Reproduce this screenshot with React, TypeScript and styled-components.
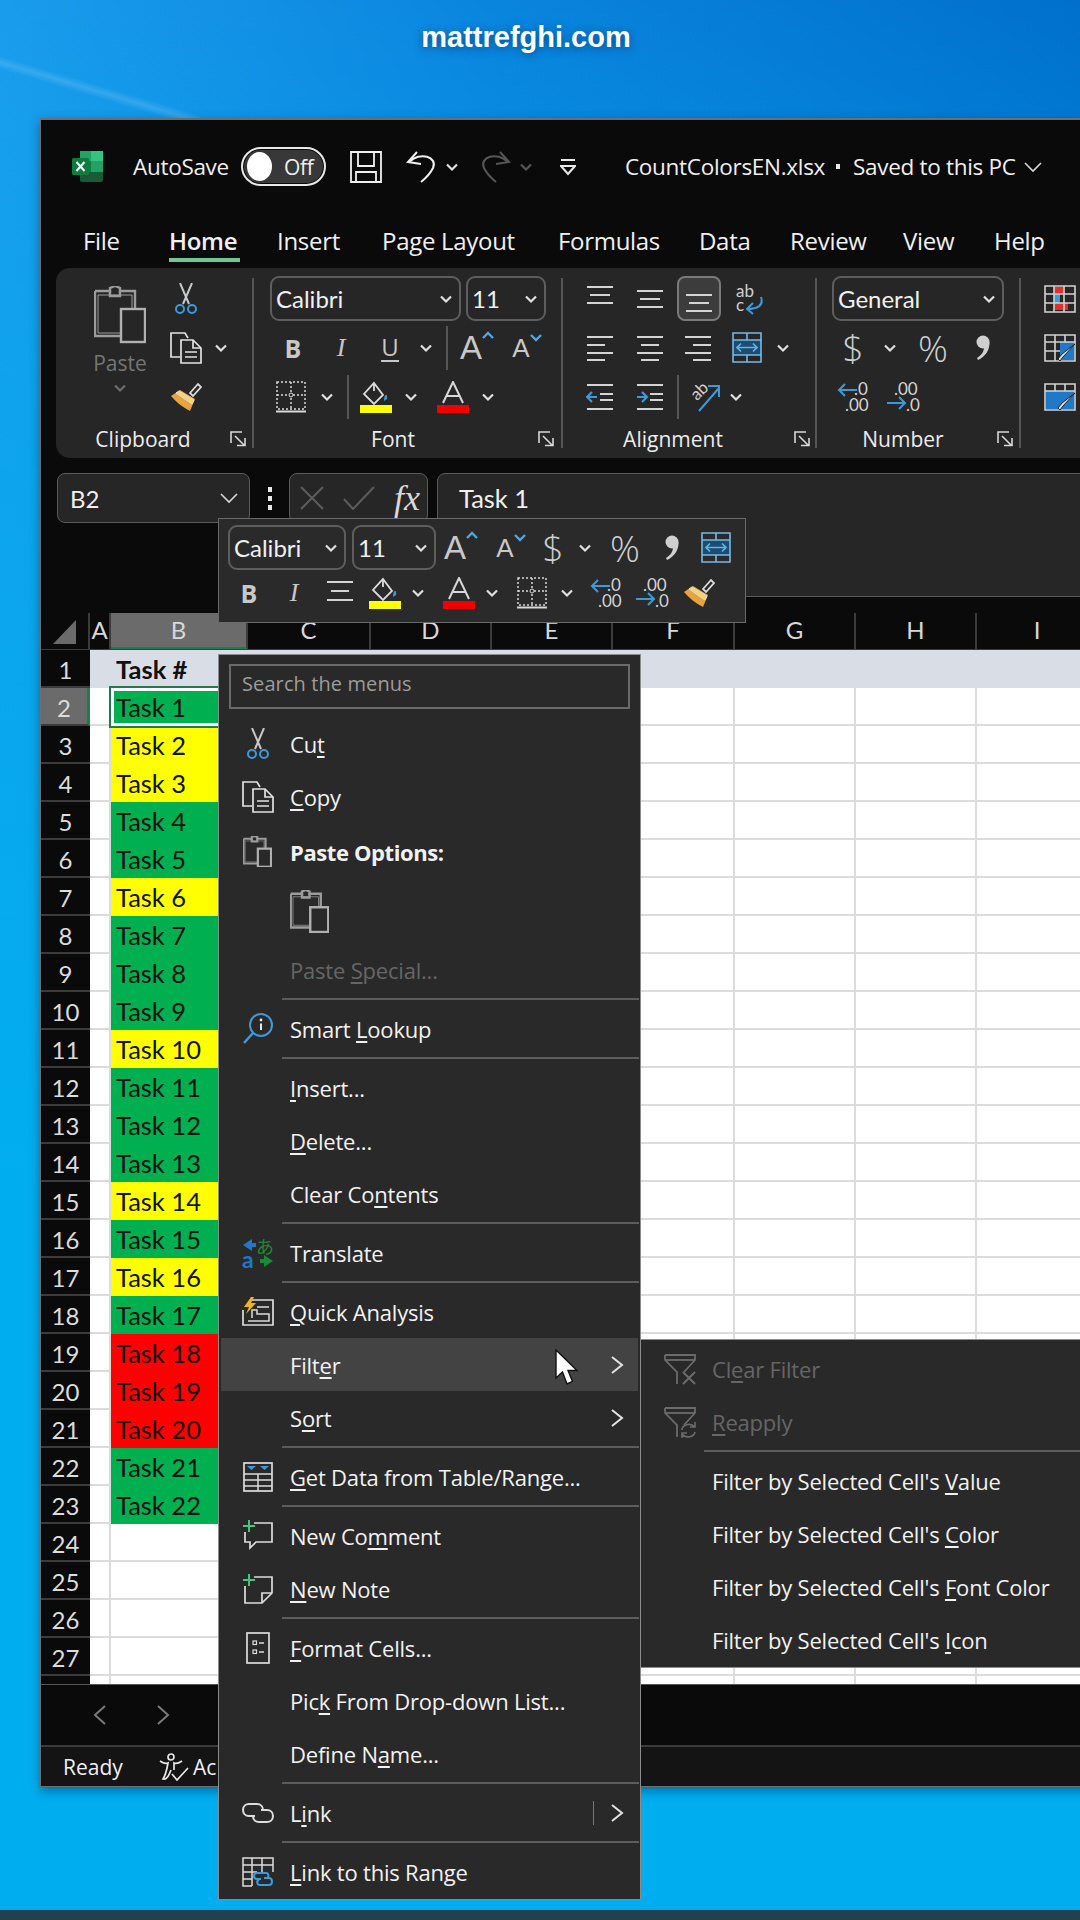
import React from 'react'
import styled, { createGlobalStyle } from 'styled-components'

const UI_FONT = `'Open Sans', 'Noto Sans', sans-serif`
const CELL_FONT = `Lato, 'Liberation Sans', sans-serif`

const GlobalStyle = createGlobalStyle`
  html, body {
    margin: 0;
    padding: 0;
    background: #00aeef;
  }
  #root {
    width: 1080px;
    height: 1920px;
    overflow: hidden;
  }
  svg {
    flex-shrink: 0;
  }
`

const Desktop = styled.div`
  position: relative;
  display: flex;
  flex-direction: column;
  width: 1080px;
  height: 1920px;
  overflow: hidden;
  background:
    linear-gradient(16.5deg, transparent 46%, rgba(255, 255, 255, 0.14) 50%, transparent 54%) 0 37px / 200px 110px no-repeat,
    linear-gradient(180deg, rgba(0, 174, 239, 0) 0%, rgba(0, 174, 239, 0.35) 18%, #00aeef 62%),
    linear-gradient(90deg, #1a9cec 0%, #0a85de 45%, #0070cc 100%);
  background-color: #00aeef;
`

const Watermark = styled.div`
  height: 118px;
  flex: none;
  padding: 20px 28px 0 0;
  box-sizing: border-box;
  text-align: center;
  font: bold 29px 'Liberation Sans', sans-serif;
  line-height: 34px;
  color: #fff;
  text-shadow: 0 2px 8px rgba(0, 40, 90, 0.6);
`

const Taskbar = styled.div`
  height: 10px;
  flex: none;
  background: #23404f;
`

const Window = styled.div`
  flex: none;
  width: 1060px;
  height: 1669px;
  margin: 0 0 123px 40px;
  box-sizing: border-box;
  display: flex;
  flex-direction: column;
  background: #0a0a0a;
  border: 1px solid #6e6e6e;
  border-top-width: 2px;
  box-shadow: 0 4px 10px rgba(0, 30, 70, 0.45);
  font-family: ${UI_FONT};
  color: #f0f0f0;
`

const TitleBar = styled.div`
  height: 93px;
  flex: none;
  display: flex;
  align-items: center;
  font-size: 22.5px;
`

const TitleSlot = styled.div<{ $w: number }>`
  width: ${(p) => p.$w}px;
  flex: none;
  display: flex;
  align-items: center;
  justify-content: center;
`

const TitleText = styled.span<{ $w: number }>`
  width: ${(p) => p.$w}px;
  flex: none;
  white-space: nowrap;
  letter-spacing: -0.3px;
`

const Toggle = styled.div`
  width: 85px;
  height: 39px;
  flex: none;
  box-sizing: border-box;
  border: 2px solid #e8e8e8;
  border-radius: 20px;
  background: #383838;
  box-shadow: inset 0 0 0 1px #0a0a0a;
  display: flex;
  align-items: center;
  padding-left: 4px;
  font-size: 21px;
  gap: 12px;
  letter-spacing: -0.3px;
`

const ToggleKnob = styled.span`
  width: 25px;
  height: 29px;
  border-radius: 50%;
  background: #fff;
  flex: none;
`

const Tabs = styled.div`
  height: 55px;
  flex: none;
  display: flex;
  align-items: center;
  padding-left: 42px;
`

const Tab = styled.div<{ $w: number; $active?: boolean }>`
  position: relative;
  width: ${(p) => p.$w}px;
  flex: none;
  height: 55px;
  line-height: 55px;
  font-size: 24px;
  letter-spacing: -0.3px;
  font-weight: ${(p) => (p.$active ? 600 : 400)};
  white-space: nowrap;
  &::after {
    content: '';
    display: ${(p) => (p.$active ? 'block' : 'none')};
    position: absolute;
    left: 0;
    bottom: 6px;
    width: 71px;
    height: 4px;
    background: #6fc892;
  }
`

const Ribbon = styled.div`
  height: 190px;
  flex: none;
  margin-left: 15px;
  display: flex;
  background: #262626;
  border-radius: 14px 0 0 14px;
  overflow: hidden;
`

const Group = styled.div<{ $w: number }>`
  width: ${(p) => p.$w}px;
  flex: none;
  display: flex;
  flex-direction: column;
  padding-top: 8px;
  box-sizing: border-box;
`

const GroupBody = styled.div`
  display: flex;
  flex-direction: column;
  gap: 4px;
  height: 143px;
`

const GroupDivider = styled.div`
  width: 2px;
  flex: none;
  margin: 10px 0;
  background: #565656;
`

const ToolRow = styled.div<{ $pad?: number }>`
  display: flex;
  align-items: center;
  height: 45px;
  padding-left: ${(p) => p.$pad ?? 0}px;
  gap: 0;
`

const Slot = styled.div<{ $w: number }>`
  width: ${(p) => p.$w}px;
  height: 45px;
  flex: none;
  display: flex;
  align-items: center;
  justify-content: center;
  color: #cfcfcf;
`

const SelectedSlot = styled(Slot)`
  box-sizing: border-box;
  border: 2px solid #7a7a7a;
  border-radius: 8px;
  background: #3c3c3c;
`

const RowDivider = styled.span`
  width: 2px;
  height: 44px;
  background: #565656;
  flex: none;
`

const LabelRow = styled.div`
  display: flex;
  align-items: center;
  height: 32px;
  margin-top: 4px;
`

const GroupLabel = styled.div<{ $w: number }>`
  width: ${(p) => p.$w}px;
  flex: none;
  text-align: center;
  font-size: 21px;
  letter-spacing: 0;
  color: #ececec;
`

const LauncherBox = styled.div<{ $mr: number }>`
  margin-left: auto;
  margin-right: ${(p) => p.$mr}px;
  display: flex;
`

const Combo = styled.div<{ $w: number }>`
  width: ${(p) => p.$w}px;
  height: 45px;
  flex: none;
  box-sizing: border-box;
  display: flex;
  align-items: center;
  justify-content: space-between;
  padding: 0 6px 0 4px;
  border: 2px solid #5e5e5e;
  border-radius: 9px;
  font-family: ${CELL_FONT};
  font-size: 24px;
  color: #f0f0f0;
`

const PasteColumn = styled.div`
  width: 68px;
  margin: 0 0 0 30px;
  flex: none;
  display: flex;
  flex-direction: column;
  align-items: center;
  padding-top: 10px;
  font-size: 21px;
  color: #757575;
`

const PasteLabel = styled.div`
  margin-top: 6px;
  line-height: 26px;
`

const PasteChevron = styled.div`
  margin-top: 7px;
  display: flex;
`

const ClipboardTools = styled.div`
  margin-left: 8px;
  display: flex;
  flex-direction: column;
  gap: 4px;
`

const ClipboardBody = styled.div`
  display: flex;
  height: 143px;
`

const BoldGlyph = styled.span`
  font: bold 25px 'Open Sans', sans-serif;
  color: #c8c8c8;
`

const ItalicGlyph = styled.span`
  font: italic 26px 'Liberation Serif', serif;
  color: #c8c8c8;
`

const UnderGlyph = styled.span`
  font: 24px 'Open Sans', sans-serif;
  line-height: 26px;
  color: #c8c8c8;
  border-bottom: 2px solid #c8c8c8;
`

const ThinGlyph = styled.span<{ $size: number }>`
  font-family: ${UI_FONT};
  font-size: ${(p) => p.$size}px;
  font-weight: 300;
  color: #cfcfcf;
`

const SizeGlyph = styled.span<{ $size: number }>`
  display: flex;
  align-items: flex-start;
  font: ${(p) => p.$size}px/${(p) => p.$size + 2}px 'Liberation Sans', sans-serif;
  color: #c8c8c8;
`

const FormulaRow = styled.div`
  height: 124px;
  flex: none;
  margin-top: 15px;
  padding-left: 16px;
  display: flex;
  align-items: flex-start;
`

const NameBox = styled.div`
  width: 193px;
  height: 50px;
  flex: none;
  box-sizing: border-box;
  padding: 0 10px 0 12px;
  display: flex;
  align-items: center;
  justify-content: space-between;
  background: #262626;
  border: 1px solid #5a5a5a;
  border-radius: 8px;
  font-family: ${CELL_FONT};
  font-size: 24px;
`

const Dots = styled.div`
  width: 39px;
  height: 50px;
  flex: none;
  display: flex;
  flex-direction: column;
  align-items: center;
  justify-content: center;
  gap: 4px;
`

const Dot = styled.span`
  width: 4px;
  height: 5px;
  background: #e8e8e8;
`

const FxBox = styled.div`
  width: 139px;
  height: 50px;
  flex: none;
  box-sizing: border-box;
  display: flex;
  align-items: center;
  justify-content: space-between;
  padding: 0 7px 0 10px;
  background: #262626;
  border: 1px solid #5a5a5a;
  border-radius: 8px;
`

const FxGlyph = styled.span`
  font: italic 36px 'Liberation Serif', serif;
  color: #d8d8d8;
`

const FormulaInput = styled.div`
  flex: 1;
  height: 124px;
  margin-left: 9px;
  box-sizing: border-box;
  padding: 9px 0 0 21px;
  background: #262626;
  border: 1px solid #5a5a5a;
  border-radius: 8px 0 0 8px;
  font-family: ${CELL_FONT};
  font-size: 25.5px;
`

const ColumnHeaders = styled.div`
  height: 37px;
  flex: none;
  margin-top: 16px;
  display: flex;
`

const Corner = styled.div`
  width: 49px;
  flex: none;
  display: flex;
  align-items: center;
  justify-content: center;
  border-right: 2px solid #3c3c3c;
  box-sizing: border-box;
`

const ColumnHead = styled.div<{ $w: number; $selected?: boolean }>`
  width: ${(p) => p.$w}px;
  flex: none;
  box-sizing: border-box;
  text-align: center;
  font-family: ${CELL_FONT};
  font-size: 24px;
  line-height: 33px;
  color: #d8d8d8;
  background: ${(p) => (p.$selected ? '#6b6b6b' : '#0a0a0a')};
  border-right: 2px solid #3c3c3c;
  border-bottom: ${(p) => (p.$selected ? '3px solid #1f7a4d' : '0')};
`

const Sheet = styled.div`
  height: 1034px;
  flex: none;
  overflow: hidden;
  border-top: 1px solid #3c3c3c;
  margin-top: -1px;
`

const SheetRow = styled.div`
  display: flex;
  height: 38px;
`

const RowHead = styled.div<{ $selected?: boolean }>`
  width: 49px;
  flex: none;
  box-sizing: border-box;
  text-align: center;
  font-family: ${CELL_FONT};
  font-size: 24px;
  line-height: 39px;
  color: #dcdcdc;
  background: ${(p) => (p.$selected ? '#6b6b6b' : '#0a0a0a')};
  border-bottom: 2px solid #3c3c3c;
  border-right: ${(p) => (p.$selected ? '3px solid #1f7a4d' : '0')};
`

const Cell = styled.div<{ $w: number; $bg?: string; $bold?: boolean; $active?: boolean }>`
  position: relative;
  width: ${(p) => p.$w}px;
  flex: none;
  box-sizing: border-box;
  padding-left: 5px;
  font-family: ${CELL_FONT};
  font-size: 25.5px;
  font-weight: ${(p) => (p.$bold ? 700 : 400)};
  line-height: 39px;
  color: #111;
  background: ${(p) => p.$bg ?? '#fff'};
  white-space: nowrap;
  ${(p) => (p.$bg ? '' : 'border-right: 2px solid #dcdcdc; border-bottom: 2px solid #dcdcdc;')}
  ${(p) => (p.$active ? 'z-index: 1; box-shadow: 0 0 0 2px #1f7a4d, inset 0 0 0 3px #fff;' : '')}
`

const TabStrip = styled.div`
  height: 61px;
  flex: none;
  display: flex;
  align-items: center;
  padding-left: 52px;
  gap: 49px;
  border-top: 1px solid #555;
  box-sizing: border-box;
`

const StatusBar = styled.div`
  flex: 1;
  display: flex;
  align-items: center;
  padding-left: 22px;
  gap: 4px;
  background: #141414;
  border-top: 2px solid #3a3a3a;
  font-size: 21px;
  font-family: ${UI_FONT};
`

const StatusText = styled.span`
  width: 92px;
  flex: none;
`

const MiniToolbar = styled.div`
  position: absolute;
  left: 218px;
  top: 518px;
  width: 528px;
  height: 105px;
  box-sizing: border-box;
  z-index: 5;
  padding: 6px 0 0 9px;
  background: #2a2a2a;
  border: 1px solid #6a6a6a;
  display: flex;
  flex-direction: column;
  gap: 0;
`

const ContextMenu = styled.div`
  position: absolute;
  left: 218px;
  top: 654px;
  width: 423px;
  height: 1246px;
  box-sizing: border-box;
  z-index: 6;
  padding: 9px 1px 0;
  background: #292929;
  border: 1px solid #8c8c8c;
  font-family: ${UI_FONT};
  font-size: 22px;
  color: #f2f2f2;
`

const SearchBox = styled.div`
  height: 45px;
  margin: 0 9px 8px;
  box-sizing: border-box;
  padding-left: 11px;
  border: 2px solid #6a6a6a;
  font-size: 20px;
  line-height: 35px;
  letter-spacing: 0.1px;
  color: #9c9c9c;
`

const SubMenu = styled.div`
  position: absolute;
  left: 640px;
  top: 1339px;
  width: 460px;
  height: 329px;
  box-sizing: border-box;
  z-index: 7;
  padding: 2px 1px 0;
  background: #292929;
  border: 1px solid #8c8c8c;
  font-family: ${UI_FONT};
  font-size: 22px;
  color: #f2f2f2;
`

const MenuRow = styled.div<{ $hover?: boolean; $disabled?: boolean; $bold?: boolean; $h?: number }>`
  height: ${(p) => p.$h ?? 53}px;
  display: flex;
  align-items: center;
  margin: 0 1px;
  letter-spacing: ${(p) => (p.$bold ? '-0.4px' : '-0.2px')};
  white-space: nowrap;
  background: ${(p) => (p.$hover ? '#434343' : 'transparent')};
  color: ${(p) => (p.$disabled ? '#666' : 'inherit')};
  font-weight: ${(p) => (p.$bold ? 700 : 400)};
  u {
    text-decoration-thickness: 1.5px;
    text-underline-offset: 3px;
  }
`

const MenuIcon = styled.div`
  width: 65px;
  margin-left: 4px;
  flex: none;
  display: flex;
  align-items: center;
  justify-content: center;
`

const MenuArrow = styled.div`
  margin-left: auto;
  display: flex;
  align-items: center;
  margin-right: 14px;
`

const LinkDivider = styled.span`
  width: 1px;
  height: 24px;
  margin-right: 16px;
  background: #777;
`

const MenuSep = styled.div`
  height: 6px;
  display: flex;
  align-items: center;
  padding-left: 62px;
  &::after {
    content: '';
    display: block;
    width: 100%;
    height: 2px;
    background: #5c5c5c;
  }
`

const CursorWrap = styled.div`
  position: absolute;
  left: 554px;
  top: 1349px;
  z-index: 8;
  display: flex;
`

/* icons */

type IconProps = { c?: string }

const Chev = ({ c = '#e0e0e0' }: IconProps) => (
  <svg width="14" height="10" viewBox="0 0 14 10">
    <path d="M2 2.5 7 7.5 12 2.5" fill="none" stroke={c} strokeWidth="2.2" />
  </svg>
)

const ThinChev = () => (
  <svg width="20" height="12" viewBox="0 0 20 12">
    <path d="M2 2 10 10 18 2" fill="none" stroke="#d8d8d8" strokeWidth="1.6" />
  </svg>
)

const RightChev = () => (
  <svg width="14" height="20" viewBox="0 0 14 20">
    <path d="M2 2 12 10 2 18" fill="none" stroke="#e4e4e4" strokeWidth="2" />
  </svg>
)

const ExcelLogo = () => (
  <svg width="31" height="31" viewBox="0 0 31 31">
    <rect x="8" y="0" width="23" height="31" rx="2" fill="#185c37" />
    <rect x="8" y="0" width="23" height="10" fill="#21a366" />
    <rect x="19" y="0" width="12" height="10" fill="#33c481" />
    <rect x="8" y="10" width="23" height="11" fill="#107c41" />
    <rect x="19" y="10" width="12" height="11" fill="#21a366" />
    <rect x="0" y="7" width="17" height="17" rx="1.5" fill="#0f7b3f" />
    <path d="M4.5 11 12.5 20M12.5 11 4.5 20" stroke="#fff" strokeWidth="2" />
  </svg>
)

const SaveIcon = () => (
  <svg width="32" height="32" viewBox="0 0 32 32" fill="none" stroke="#f0f0f0" strokeWidth="1.8">
    <path d="M1 1H31V31H1Z" />
    <path d="M8 1V15H24V1M6 31V21H26V31" />
  </svg>
)

const UndoIcon = ({ c = '#f0f0f0' }: IconProps) => (
  <svg width="30" height="32" viewBox="0 0 30 32" fill="none" stroke={c} strokeWidth="2">
    <path d="M11 1 2 11 15 13" />
    <path d="M3 11C14 0 32 6 27 17 24 23 20 27 15 31" />
  </svg>
)

const RedoIcon = ({ c = '#565656' }: IconProps) => (
  <svg width="30" height="32" viewBox="0 0 30 32" fill="none" stroke={c} strokeWidth="2">
    <path d="M19 1 28 11 15 13" />
    <path d="M27 11C16 0-2 6 3 17 6 23 10 27 15 31" />
  </svg>
)

const QatIcon = () => (
  <svg width="16" height="20" viewBox="0 0 16 20">
    <path d="M1 3H15" stroke="#e8e8e8" strokeWidth="2" />
    <path d="M1 9H15L8 17Z" fill="none" stroke="#e8e8e8" strokeWidth="2" />
  </svg>
)

const ClipBoardIcon = ({ scale = 1, c = '#9c9c9c' }: IconProps & { scale?: number }) => (
  <svg width={52 * scale} height={58 * scale} viewBox="0 0 52 58" fill="none" stroke={c} strokeWidth={2.4 / Math.max(scale, 0.6)}>
    <path d="M1 5H16V2L21 0 26 2V5H41V23" stroke={c} />
    <path d="M1 5V50H27" />
    <path d="M4 9H38V23M4 9V47H27" strokeWidth="1" />
    <path d="M16 5V10H26V5" />
    <rect x="27" y="23" width="24" height="33" stroke="#b0b0b0" />
  </svg>
)

const ScissorsIcon = () => (
  <svg width="22" height="32" viewBox="0 0 22 32" fill="none">
    <path d="M5 0 14 21M17 0 8 21" stroke="#c8c8c8" strokeWidth="2" />
    <circle cx="5" cy="26" r="4" stroke="#3d9ad9" strokeWidth="2" />
    <circle cx="17" cy="26" r="4" stroke="#3d9ad9" strokeWidth="2" />
  </svg>
)

const CopyIcon = () => (
  <svg width="32" height="32" viewBox="0 0 32 32" fill="none" stroke="#e2e2e2" strokeWidth="1.7">
    <path d="M10 1H1V25H10" />
    <path d="M10 1H15L18 6" />
    <path d="M11 8H23L31 16V31H11Z" />
    <path d="M23 8V16H31M15 20H27M15 25H27" />
  </svg>
)

const BrushIcon = () => (
  <svg width="32" height="30" viewBox="0 0 32 30">
    <path d="M20 11 28 2 31 5 23 14Z" fill="none" stroke="#dcdcdc" strokeWidth="1.8" />
    <path d="M10 8 25 17 20 29C12 25 6 20 1 14Z" fill="#e8a33c" />
    <path d="M9 9 24 18 22 22 6 11Z" fill="#f5d36e" stroke="#ddd" strokeWidth="1" />
  </svg>
)

const BordersIcon = () => (
  <svg width="30" height="32" viewBox="0 0 30 32" fill="none" stroke="#d8d8d8">
    <path d="M1 1H29V28H1ZM15 1V28M1 14H29" strokeWidth="1.5" strokeDasharray="2 2" />
    <path d="M0 30.5H30" strokeWidth="2" />
    <circle cx="15" cy="14" r="2" fill="#262626" strokeWidth="1" />
  </svg>
)

const FillIcon = () => (
  <svg width="32" height="32" viewBox="0 0 32 32" fill="none">
    <path d="M14 2 23 14 14 23 4 13Z" stroke="#dcdcdc" strokeWidth="1.8" />
    <path d="M14 2V10" stroke="#dcdcdc" strokeWidth="1.8" />
    <path d="M24 20C24 12 28 12 27 18Z" fill="#3d9ad9" />
    <rect x="0" y="24" width="32" height="8" fill="#ffff00" />
  </svg>
)

const FontColorIcon = () => (
  <svg width="32" height="32" viewBox="0 0 32 32" fill="none">
    <path d="M6 22 16 1 26 22M9.5 15H22.5" stroke="#d8d8d8" strokeWidth="2" />
    <rect x="0" y="24" width="32" height="8" fill="#f00000" />
  </svg>
)

const Caret = ({ down }: { down?: boolean }) => (
  <svg width="12" height="8" viewBox="0 0 12 8" style={{ marginTop: down ? 0 : 1 }}>
    <path d={down ? 'M1 1 6 6 11 1' : 'M1 7 6 2 11 7'} fill="none" stroke="#4fa6e0" strokeWidth="2.4" />
  </svg>
)

const Lines = ({ rows }: { rows: number[][] }) => (
  <svg width="28" height="28" viewBox="0 0 28 28" stroke="#d4d4d4" strokeWidth="2">
    {rows.map(([a, b, y]) => (
      <path key={y} d={`M${a} ${y}H${b}`} />
    ))}
  </svg>
)

const ALIGN_TOP = [[1, 27, 2], [4, 24, 10], [1, 27, 18]]
const ALIGN_MID = [[1, 27, 6], [4, 24, 14], [1, 27, 22]]
const ALIGN_BOT = [[1, 27, 10], [4, 24, 18], [1, 27, 26]]
const LEFT = [[1, 27, 3], [1, 19, 11], [1, 27, 19], [1, 19, 26]]
const CENTER = [[1, 27, 3], [5, 23, 11], [1, 27, 19], [5, 23, 26]]
const RIGHT = [[1, 27, 3], [9, 27, 11], [1, 27, 19], [9, 27, 26]]
const MINI_ALIGN = [[1, 27, 3], [5, 23, 12], [1, 27, 21]]

const WrapIcon = () => (
  <svg width="30" height="32" viewBox="0 0 30 32">
    <text x="1" y="14" fontFamily="Lato" fontSize="17" fill="#d0d0d0">ab</text>
    <text x="1" y="28" fontFamily="Lato" fontSize="17" fill="#d0d0d0">c</text>
    <path d="M26 14C29 23 22 26 12 26M18 20 12 26 18 31" fill="none" stroke="#3d9ad9" strokeWidth="2" />
  </svg>
)

const MergeIcon = () => (
  <svg width="30" height="31" viewBox="0 0 30 31" fill="none">
    <rect x="1" y="8" width="28" height="15" fill="#1b4d70" />
    <path d="M1 1H29V30H1ZM1 8H29M1 23H29M15 1V8M15 23V30" stroke="#79b9e4" strokeWidth="1.6" />
    <path d="M5 15.5H25M9 11.5 5 15.5 9 19.5M21 11.5 25 15.5 21 19.5" stroke="#62b2e8" strokeWidth="1.7" />
  </svg>
)

const IndentIcon = ({ right }: { right?: boolean }) => (
  <svg width="28" height="28" viewBox="0 0 28 28" fill="none">
    <path d="M1 2H27M1 26H27M14 11H27M14 17H27" stroke="#d4d4d4" strokeWidth="2" />
    {right ? (
      <path d="M1 14H10M6 9 11 14 6 19" stroke="#3d9ad9" strokeWidth="2.2" />
    ) : (
      <path d="M11 14H2M6 9 1 14 6 19" stroke="#3d9ad9" strokeWidth="2.2" />
    )}
  </svg>
)

const OrientIcon = () => (
  <svg width="32" height="32" viewBox="0 0 32 32">
    <text x="4" y="17" fontFamily="Lato" fontSize="17" fill="#d0d0d0" transform="rotate(-45 10 14)">ab</text>
    <path d="M10 30 30 7M19 5H30V16" fill="none" stroke="#3d9ad9" strokeWidth="2" />
  </svg>
)

const CommaIcon = () => (
  <svg width="14" height="26" viewBox="0 0 14 26">
    <circle cx="7" cy="7" r="6.5" fill="#cfcfcf" />
    <path d="M13.5 7C14 15 9 22 2 25L1 23C6 20 8 16 8 12Z" fill="#cfcfcf" />
  </svg>
)

const DecimalIcon = ({ inc }: { inc?: boolean }) => (
  <svg width="34" height="32" viewBox="0 0 34 32" fontFamily="Lato" fontSize="17" fill="#d4d4d4">
    {inc ? (
      <>
        <text x="8" y="14">.00</text>
        <text x="20" y="30">.0</text>
        <path d="M1 22H19M13 16 19 22 13 28" fill="none" stroke="#3d9ad9" strokeWidth="2" />
      </>
    ) : (
      <>
        <text x="17" y="14">.0</text>
        <text x="8" y="30">.00</text>
        <path d="M20 9H2M8 3 2 9 8 15" fill="none" stroke="#3d9ad9" strokeWidth="2" />
      </>
    )}
  </svg>
)

const CondFormatIcon = () => (
  <svg width="32" height="28" viewBox="0 0 32 28" fill="none">
    <rect x="10" y="2" width="9" height="6" fill="#e03030" />
    <rect x="10" y="9" width="6" height="9" fill="#3d9ad9" />
    <rect x="10" y="18" width="14" height="7" fill="#e03030" />
    <path d="M1 1H31V27H1ZM1 9H31M1 18H31M10 1V27M20 1V27" stroke="#d4d4d4" strokeWidth="1.6" />
  </svg>
)

const TableStyleIcon = ({ full }: { full?: boolean }) => (
  <svg width="32" height="28" viewBox="0 0 32 28" fill="none">
    <rect x={full ? 2 : 16} y="8" width={full ? 28 : 14} height="18" fill="#1f78c8" />
    <path d="M1 1H31V27H1ZM1 8H31M11 1V8M21 1V8" stroke="#d4d4d4" strokeWidth="1.6" />
    {!full && <path d="M1 17H16M11 8V27" stroke="#d4d4d4" strokeWidth="1.6" />}
    <path d="M31 10 19 23 16 27 14 25 18 20Z" fill="#dcdcdc" stroke="#262626" />
  </svg>
)

const Launcher = () => (
  <svg width="16" height="16" viewBox="0 0 16 16" fill="none" stroke="#d8d8d8" strokeWidth="1.6">
    <path d="M12 1H1V12" />
    <path d="M5 5 14 14M7 14.5H15V7" />
  </svg>
)

const LookupIcon = () => (
  <svg width="32" height="32" viewBox="0 0 32 32" fill="none">
    <circle cx="19" cy="12" r="11" stroke="#3d9ad9" strokeWidth="2" />
    <path d="M11 20 2 30" stroke="#3d9ad9" strokeWidth="2.6" />
    <circle cx="19" cy="7" r="1.4" fill="#e8e8e8" />
    <path d="M19 10.5V17" stroke="#e8e8e8" strokeWidth="2" />
  </svg>
)

const TranslateIcon = () => (
  <svg width="32" height="32" viewBox="0 0 32 32">
    <path d="M10 2 1 8 10 14ZM10 6H14V10H10Z" fill="#1f78c8" />
    <text x="0" y="31" fontFamily="Lato" fontWeight="700" fontSize="23" fill="#1f78c8">a</text>
    <text x="14" y="17" fontFamily="'Noto Sans CJK JP'" fontSize="18" fill="#1a8a35">あ</text>
    <path d="M22 18 31 24 22 30ZM22 22H18V26H22Z" fill="#1a8a35" />
  </svg>
)

const QuickAnalysisIcon = () => (
  <svg width="32" height="30" viewBox="0 0 32 30" fill="none">
    <path d="M10 3H31V28H1V13" stroke="#dcdcdc" strokeWidth="1.7" />
    <path d="M15 10H27M6 24H27V17H15V13H10V21" stroke="#dcdcdc" strokeWidth="1.5" />
    <path d="M9 0 2 10H7L4 17 14 6H9L12 0Z" fill="#f0b429" />
  </svg>
)

const TableDataIcon = () => (
  <svg width="30" height="30" viewBox="0 0 30 30" fill="none">
    <rect x="1" y="1" width="28" height="28" stroke="#dcdcdc" strokeWidth="1.7" />
    <path d="M1 12H29M1 18H29M1 24H29M15 12V29" stroke="#dcdcdc" strokeWidth="1.5" />
    <path d="M4 4H13L8.5 8ZM17 4H26L21.5 8Z" fill="#3d9ad9" />
  </svg>
)

const CommentIcon = () => (
  <svg width="32" height="32" viewBox="0 0 32 32" fill="none">
    <path d="M12 3H30V22H14L8 28V22H3V12" stroke="#dcdcdc" strokeWidth="1.7" />
    <path d="M7 0V12M1 6H13" stroke="#4cc27a" strokeWidth="2" />
  </svg>
)

const NoteIcon = () => (
  <svg width="32" height="30" viewBox="0 0 32 30" fill="none">
    <path d="M12 3H30V19L20 29H3V12M20 29V19H30" stroke="#dcdcdc" strokeWidth="1.7" />
    <path d="M7 0V12M1 6H13" stroke="#4cc27a" strokeWidth="2" />
  </svg>
)

const FormatCellsIcon = () => (
  <svg width="24" height="32" viewBox="0 0 24 32" fill="none" stroke="#dcdcdc">
    <rect x="1" y="1" width="22" height="30" strokeWidth="1.7" />
    <rect x="7" y="9" width="3.5" height="3.5" strokeWidth="1.2" />
    <rect x="7" y="18" width="3.5" height="3.5" strokeWidth="1.2" />
    <path d="M13 11H18M13 20H18" strokeWidth="1.4" />
  </svg>
)

const LinkIcon = () => (
  <svg width="32" height="22" viewBox="0 0 32 22" fill="none" stroke="#dcdcdc" strokeWidth="2">
    <path d="M13 14H7C3 14 1 11 1 8 1 4 4 2 7 2H15C19 2 21 5 21 8" />
    <path d="M19 8H25C29 8 31 11 31 14 31 18 28 20 25 20H17C13 20 11 17 11 14" />
  </svg>
)

const LinkRangeIcon = () => (
  <svg width="32" height="30" viewBox="0 0 32 30" fill="none">
    <path d="M10 29H1V1H31V15M1 8H31M10 1V29M20 1V15M1 15H15M1 22H10" stroke="#dcdcdc" strokeWidth="1.5" />
    <path d="M19 22H15C11 22 11 16 15 16H24C27 16 27 20 25 21" stroke="#3d9ad9" strokeWidth="2" />
    <path d="M22 21H27C31 21 31 28 27 28H18C15 28 14 24 17 23" stroke="#3d9ad9" strokeWidth="2" />
  </svg>
)

const FilterIcon = ({ kind }: { kind: 'x' | 'reload' }) => (
  <svg width="32" height="32" viewBox="0 0 32 32" fill="none" stroke="#6b6b6b" strokeWidth="1.8">
    <path d="M1 2H31V7L20 19M1 2V7L13 19V31" />
    <path d="M1 7H31" />
    {kind === 'x' ? (
      <path d="M19 19 31 31M31 19 19 31" strokeWidth="2" />
    ) : (
      <path d="M18 24C18 19 26 16 31 21M31 16V21H26M31 26C30 31 22 33 18 28M18 32V27H23" strokeWidth="1.6" />
    )}
  </svg>
)

const AccessIcon = () => (
  <svg width="30" height="28" viewBox="0 0 30 28" fill="none" stroke="#e8e8e8" strokeWidth="1.7">
    <circle cx="12" cy="4" r="3" />
    <path d="M1 8C4 10 7 11 9 10 8 15 7 22 4 26 8 27 10 22 12 17M23 8C20 10 17 11 15 10V17" />
    <path d="M13 21 18 27 29 15" />
  </svg>
)

const ArrowLeft = () => (
  <svg width="14" height="20" viewBox="0 0 14 20">
    <path d="M12 1 2 10 12 19" fill="none" stroke="#7a7a7a" strokeWidth="2" />
  </svg>
)

const ArrowRight = () => (
  <svg width="14" height="20" viewBox="0 0 14 20">
    <path d="M2 1 12 10 2 19" fill="none" stroke="#7a7a7a" strokeWidth="2" />
  </svg>
)

const Cursor = () => (
  <svg width="25" height="38" viewBox="0 0 25 38">
    <path d="M2 1V29L8.5 23 13 35 18.5 32.5 14 21.5H23Z" fill="#fff" stroke="#111" strokeWidth="1.4" />
  </svg>
)

// "_" marks the letter that gets the access key underline
const Mn = ({ text }: { text: string }) => {
  const at = text.indexOf('_')
  if (at < 0) return <span>{text}</span>
  return (
    <span>
      {text.slice(0, at)}
      <u>{text[at + 1]}</u>
      {text.slice(at + 2)}
    </span>
  )
}

const FontSizeUp = () => (
  <SizeGlyph $size={33}>
    A<Caret />
  </SizeGlyph>
)

const FontSizeDown = () => (
  <SizeGlyph $size={26}>
    A<Caret down />
  </SizeGlyph>
)

const COLUMNS: [string, number][] = [
  ['A', 21],
  ['B', 137],
  ['C', 123],
  ['D', 121],
  ['E', 121],
  ['F', 122],
  ['G', 121],
  ['H', 121],
  ['I', 122],
]

const GREEN = '#00b050'
const YELLOW = '#ffff00'
const RED = '#ff0000'

const TASK_COLORS = 'GYYGGYGGGYGGGYGYGRRRGG'

const colorFor = (k: string) => (k === 'G' ? GREEN : k === 'Y' ? YELLOW : RED)

const SheetRows = () => (
  <>
    {Array.from({ length: 28 }, (_, i) => {
      const n = i + 1
      const task = i >= 1 && i <= 22 ? i : 0
      return (
        <SheetRow key={n}>
          <RowHead $selected={n === 2}>{n === 28 ? '' : n}</RowHead>
          {n === 1 ? (
            <>
              <Cell $w={21} $bg="#d9dee6" />
              <Cell $w={137} $bg="#d9dee6" $bold>
                Task #
              </Cell>
              <Cell $w={880} $bg="#d9dee6" />
            </>
          ) : (
            <>
              <Cell $w={21} />
              <Cell $w={137} $bg={task ? colorFor(TASK_COLORS[task - 1]) : undefined} $active={n === 2}>
                {task ? `Task ${task}` : ''}
              </Cell>
              {COLUMNS.slice(2).map(([name, w]) => (
                <Cell key={name} $w={w} />
              ))}
            </>
          )}
        </SheetRow>
      )
    })}
  </>
)

const Sep = () => <MenuSep />

export default function App() {
  return (
    <Desktop>
      <GlobalStyle />
      <Watermark>mattrefghi.com</Watermark>
      <Window>
        <TitleBar>
          <TitleSlot $w={92}>
            <ExcelLogo />
          </TitleSlot>
          <TitleText $w={108}>AutoSave</TitleText>
          <Toggle>
            <ToggleKnob />
            Off
          </Toggle>
          <TitleSlot $w={80}>
            <SaveIcon />
          </TitleSlot>
          <TitleSlot $w={30}>
            <UndoIcon />
          </TitleSlot>
          <TitleSlot $w={32}>
            <Chev />
          </TitleSlot>
          <TitleSlot $w={56}>
            <RedoIcon />
          </TitleSlot>
          <TitleSlot $w={4}>
            <Chev c="#565656" />
          </TitleSlot>
          <TitleSlot $w={80}>
            <QatIcon />
          </TitleSlot>
          <TitleSlot $w={17} />
          <TitleText $w={198}>CountColorsEN.xlsx</TitleText>
          <TitleSlot $w={30}>
            <Dot />
          </TitleSlot>
          <TitleText $w={170}>Saved to this PC</TitleText>
          <ThinChev />
        </TitleBar>
        <Tabs>
          <Tab $w={86}>File</Tab>
          <Tab $w={108} $active>
            Home
          </Tab>
          <Tab $w={105}>Insert</Tab>
          <Tab $w={176}>Page Layout</Tab>
          <Tab $w={141}>Formulas</Tab>
          <Tab $w={91}>Data</Tab>
          <Tab $w={113}>Review</Tab>
          <Tab $w={91}>View</Tab>
          <Tab $w={60}>Help</Tab>
        </Tabs>
        <Ribbon>
          <Group $w={196}>
            <ClipboardBody>
              <PasteColumn>
                <ClipBoardIcon />
                <PasteLabel>Paste</PasteLabel>
                <PasteChevron>
                  <Chev c="#6c6c6c" />
                </PasteChevron>
              </PasteColumn>
              <ClipboardTools>
                <ToolRow>
                  <Slot $w={48}>
                    <ScissorsIcon />
                  </Slot>
                </ToolRow>
                <ToolRow>
                  <Slot $w={48}>
                    <CopyIcon />
                  </Slot>
                  <Slot $w={22}>
                    <Chev />
                  </Slot>
                </ToolRow>
                <ToolRow>
                  <Slot $w={48}>
                    <BrushIcon />
                  </Slot>
                </ToolRow>
              </ClipboardTools>
            </ClipboardBody>
            <LabelRow>
              <GroupLabel $w={174}>Clipboard</GroupLabel>
              <LauncherBox $mr={6}>
                <Launcher />
              </LauncherBox>
            </LabelRow>
          </Group>
          <GroupDivider />
          <Group $w={307}>
            <GroupBody>
              <ToolRow $pad={16}>
                <Combo $w={191}>
                  Calibri
                  <Chev />
                </Combo>
                <Slot $w={5} />
                <Combo $w={80}>
                  11
                  <Chev />
                </Combo>
              </ToolRow>
              <ToolRow $pad={16}>
                <Slot $w={46}>
                  <BoldGlyph>B</BoldGlyph>
                </Slot>
                <Slot $w={50}>
                  <ItalicGlyph>I</ItalicGlyph>
                </Slot>
                <Slot $w={48}>
                  <UnderGlyph>U</UnderGlyph>
                </Slot>
                <Slot $w={24}>
                  <Chev />
                </Slot>
                <Slot $w={18}>
                  <RowDivider />
                </Slot>
                <Slot $w={42}>
                  <FontSizeUp />
                </Slot>
                <Slot $w={58}>
                  <FontSizeDown />
                </Slot>
              </ToolRow>
              <ToolRow $pad={16}>
                <Slot $w={42}>
                  <BordersIcon />
                </Slot>
                <Slot $w={30}>
                  <Chev />
                </Slot>
                <Slot $w={11}>
                  <RowDivider />
                </Slot>
                <Slot $w={46}>
                  <FillIcon />
                </Slot>
                <Slot $w={24}>
                  <Chev />
                </Slot>
                <Slot $w={60}>
                  <FontColorIcon />
                </Slot>
                <Slot $w={10}>
                  <Chev />
                </Slot>
              </ToolRow>
            </GroupBody>
            <LabelRow>
              <GroupLabel $w={278}>Font</GroupLabel>
              <LauncherBox $mr={7}>
                <Launcher />
              </LauncherBox>
            </LabelRow>
          </Group>
          <GroupDivider />
          <Group $w={252}>
            <GroupBody>
              <ToolRow $pad={14}>
                <Slot $w={46}>
                  <Lines rows={ALIGN_TOP} />
                </Slot>
                <Slot $w={54}>
                  <Lines rows={ALIGN_MID} />
                </Slot>
                <SelectedSlot $w={44}>
                  <Lines rows={ALIGN_BOT} />
                </SelectedSlot>
                <Slot $w={58}>
                  <WrapIcon />
                </Slot>
              </ToolRow>
              <ToolRow $pad={14}>
                <Slot $w={46}>
                  <Lines rows={LEFT} />
                </Slot>
                <Slot $w={54}>
                  <Lines rows={CENTER} />
                </Slot>
                <Slot $w={42}>
                  <Lines rows={RIGHT} />
                </Slot>
                <Slot $w={56}>
                  <MergeIcon />
                </Slot>
                <Slot $w={16}>
                  <Chev />
                </Slot>
              </ToolRow>
              <ToolRow $pad={14}>
                <Slot $w={46}>
                  <IndentIcon />
                </Slot>
                <Slot $w={54}>
                  <IndentIcon right />
                </Slot>
                <RowDivider />
                <Slot $w={52}>
                  <OrientIcon />
                </Slot>
                <Slot $w={10}>
                  <Chev />
                </Slot>
              </ToolRow>
            </GroupBody>
            <LabelRow>
              <GroupLabel $w={220}>Alignment</GroupLabel>
              <LauncherBox $mr={5}>
                <Launcher />
              </LauncherBox>
            </LabelRow>
          </Group>
          <GroupDivider />
          <Group $w={202}>
            <GroupBody>
              <ToolRow $pad={15}>
                <Combo $w={172}>
                  General
                  <Chev />
                </Combo>
              </ToolRow>
              <ToolRow $pad={15}>
                <Slot $w={42}>
                  <ThinGlyph $size={37}>$</ThinGlyph>
                </Slot>
                <Slot $w={32}>
                  <Chev />
                </Slot>
                <Slot $w={54}>
                  <ThinGlyph $size={37}>%</ThinGlyph>
                </Slot>
                <Slot $w={46}>
                  <CommaIcon />
                </Slot>
              </ToolRow>
              <ToolRow $pad={15}>
                <Slot $w={44}>
                  <DecimalIcon />
                </Slot>
                <Slot $w={54}>
                  <DecimalIcon inc />
                </Slot>
              </ToolRow>
            </GroupBody>
            <LabelRow>
              <GroupLabel $w={172}>Number</GroupLabel>
              <LauncherBox $mr={6}>
                <Launcher />
              </LauncherBox>
            </LabelRow>
          </Group>
          <GroupDivider />
          <Group $w={78}>
            <GroupBody>
              <ToolRow>
                <Slot $w={78}>
                  <CondFormatIcon />
                </Slot>
              </ToolRow>
              <ToolRow>
                <Slot $w={78}>
                  <TableStyleIcon />
                </Slot>
              </ToolRow>
              <ToolRow>
                <Slot $w={78}>
                  <TableStyleIcon full />
                </Slot>
              </ToolRow>
            </GroupBody>
          </Group>
        </Ribbon>
        <FormulaRow>
          <NameBox>
            B2
            <ThinChev />
          </NameBox>
          <Dots>
            <Dot />
            <Dot />
            <Dot />
          </Dots>
          <FxBox>
            <svg width="24" height="24" viewBox="0 0 24 24" fill="none" stroke="#5c5c5c" strokeWidth="2">
              <path d="M1 1 23 23M23 1 1 23" />
            </svg>
            <svg width="32" height="24" viewBox="0 0 32 24" fill="none" stroke="#5c5c5c" strokeWidth="2">
              <path d="M1 13 10 23 31 1" />
            </svg>
            <FxGlyph>fx</FxGlyph>
          </FxBox>
          <FormulaInput>Task 1</FormulaInput>
        </FormulaRow>
        <ColumnHeaders>
          <Corner>
            <svg width="23" height="24" viewBox="0 0 23 24">
              <path d="M23 0V24H0Z" fill="#6a6a6a" />
            </svg>
          </Corner>
          {COLUMNS.map(([name, w]) => (
            <ColumnHead key={name} $w={w} $selected={name === 'B'}>
              {name}
            </ColumnHead>
          ))}
        </ColumnHeaders>
        <Sheet>
          <SheetRows />
        </Sheet>
        <TabStrip>
          <ArrowLeft />
          <ArrowRight />
        </TabStrip>
        <StatusBar>
          <StatusText>Ready</StatusText>
          <AccessIcon />
          <span>Ac</span>
        </StatusBar>
      </Window>
      <Taskbar />

      <MiniToolbar>
        <ToolRow>
          <Combo $w={118}>
            Calibri
            <Chev />
          </Combo>
          <Slot $w={6} />
          <Combo $w={84}>
            11
            <Chev />
          </Combo>
          <Slot $w={50}>
            <FontSizeUp />
          </Slot>
          <Slot $w={50}>
            <FontSizeDown />
          </Slot>
          <Slot $w={34}>
            <ThinGlyph $size={37}>$</ThinGlyph>
          </Slot>
          <Slot $w={30}>
            <Chev />
          </Slot>
          <Slot $w={50}>
            <ThinGlyph $size={37}>%</ThinGlyph>
          </Slot>
          <Slot $w={44}>
            <CommaIcon />
          </Slot>
          <Slot $w={44}>
            <MergeIcon />
          </Slot>
        </ToolRow>
        <ToolRow>
          <Slot $w={42}>
            <BoldGlyph>B</BoldGlyph>
          </Slot>
          <Slot $w={48}>
            <ItalicGlyph>I</ItalicGlyph>
          </Slot>
          <Slot $w={44}>
            <Lines rows={MINI_ALIGN} />
          </Slot>
          <Slot $w={46}>
            <FillIcon />
          </Slot>
          <Slot $w={20}>
            <Chev />
          </Slot>
          <Slot $w={62}>
            <FontColorIcon />
          </Slot>
          <Slot $w={4}>
            <Chev />
          </Slot>
          <Slot $w={14} />
          <Slot $w={48}>
            <BordersIcon />
          </Slot>
          <Slot $w={22}>
            <Chev />
          </Slot>
          <Slot $w={58}>
            <DecimalIcon />
          </Slot>
          <Slot $w={32}>
            <DecimalIcon inc />
          </Slot>
          <Slot $w={62}>
            <BrushIcon />
          </Slot>
        </ToolRow>
      </MiniToolbar>

      <ContextMenu>
        <SearchBox>Search the menus</SearchBox>
        <MenuRow>
          <MenuIcon>
            <ScissorsIcon />
          </MenuIcon>
          <Mn text="Cu_t" />
        </MenuRow>
        <MenuRow>
          <MenuIcon>
            <CopyIcon />
          </MenuIcon>
          <Mn text="_Copy" />
        </MenuRow>
        <MenuRow $h={57} $bold>
          <MenuIcon>
            <ClipBoardIcon scale={0.55} />
          </MenuIcon>
          <Mn text="Paste Options:" />
        </MenuRow>
        <MenuRow $h={63}>
          <MenuIcon />
          <ClipBoardIcon scale={0.75} />
        </MenuRow>
        <MenuRow $disabled>
          <MenuIcon />
          <Mn text="Paste _Special..." />
        </MenuRow>
        <Sep />
        <MenuRow>
          <MenuIcon>
            <LookupIcon />
          </MenuIcon>
          <Mn text="Smart _Lookup" />
        </MenuRow>
        <Sep />
        <MenuRow>
          <MenuIcon />
          <Mn text="_Insert..." />
        </MenuRow>
        <MenuRow>
          <MenuIcon />
          <Mn text="_Delete..." />
        </MenuRow>
        <MenuRow>
          <MenuIcon />
          <Mn text="Clear Co_ntents" />
        </MenuRow>
        <Sep />
        <MenuRow>
          <MenuIcon>
            <TranslateIcon />
          </MenuIcon>
          <Mn text="Translate" />
        </MenuRow>
        <Sep />
        <MenuRow>
          <MenuIcon>
            <QuickAnalysisIcon />
          </MenuIcon>
          <Mn text="_Quick Analysis" />
        </MenuRow>
        <MenuRow $hover>
          <MenuIcon />
          <Mn text="Filt_er" />
          <MenuArrow>
            <RightChev />
          </MenuArrow>
        </MenuRow>
        <MenuRow>
          <MenuIcon />
          <Mn text="S_ort" />
          <MenuArrow>
            <RightChev />
          </MenuArrow>
        </MenuRow>
        <Sep />
        <MenuRow>
          <MenuIcon>
            <TableDataIcon />
          </MenuIcon>
          <Mn text="_Get Data from Table/Range..." />
        </MenuRow>
        <Sep />
        <MenuRow>
          <MenuIcon>
            <CommentIcon />
          </MenuIcon>
          <Mn text="New Co_mment" />
        </MenuRow>
        <MenuRow>
          <MenuIcon>
            <NoteIcon />
          </MenuIcon>
          <Mn text="_New Note" />
        </MenuRow>
        <Sep />
        <MenuRow>
          <MenuIcon>
            <FormatCellsIcon />
          </MenuIcon>
          <Mn text="_Format Cells..." />
        </MenuRow>
        <MenuRow>
          <MenuIcon />
          <Mn text="Pic_k From Drop-down List..." />
        </MenuRow>
        <MenuRow>
          <MenuIcon />
          <Mn text="Define N_ame..." />
        </MenuRow>
        <Sep />
        <MenuRow>
          <MenuIcon>
            <LinkIcon />
          </MenuIcon>
          <Mn text="L_ink" />
          <MenuArrow>
            <LinkDivider />
            <RightChev />
          </MenuArrow>
        </MenuRow>
        <Sep />
        <MenuRow>
          <MenuIcon>
            <LinkRangeIcon />
          </MenuIcon>
          <Mn text="_Link to this Range" />
        </MenuRow>
      </ContextMenu>

      <SubMenu>
        <MenuRow $disabled>
          <MenuIcon>
            <FilterIcon kind="x" />
          </MenuIcon>
          <Mn text="Cl_ear Filter" />
        </MenuRow>
        <MenuRow $disabled>
          <MenuIcon>
            <FilterIcon kind="reload" />
          </MenuIcon>
          <Mn text="_Reapply" />
        </MenuRow>
        <Sep />
        <MenuRow>
          <MenuIcon />
          <Mn text="Filter by Selected Cell's _Value" />
        </MenuRow>
        <MenuRow>
          <MenuIcon />
          <Mn text="Filter by Selected Cell's _Color" />
        </MenuRow>
        <MenuRow>
          <MenuIcon />
          <Mn text="Filter by Selected Cell's _Font Color" />
        </MenuRow>
        <MenuRow>
          <MenuIcon />
          <Mn text="Filter by Selected Cell's _Icon" />
        </MenuRow>
      </SubMenu>

      <CursorWrap>
        <Cursor />
      </CursorWrap>
    </Desktop>
  )
}
